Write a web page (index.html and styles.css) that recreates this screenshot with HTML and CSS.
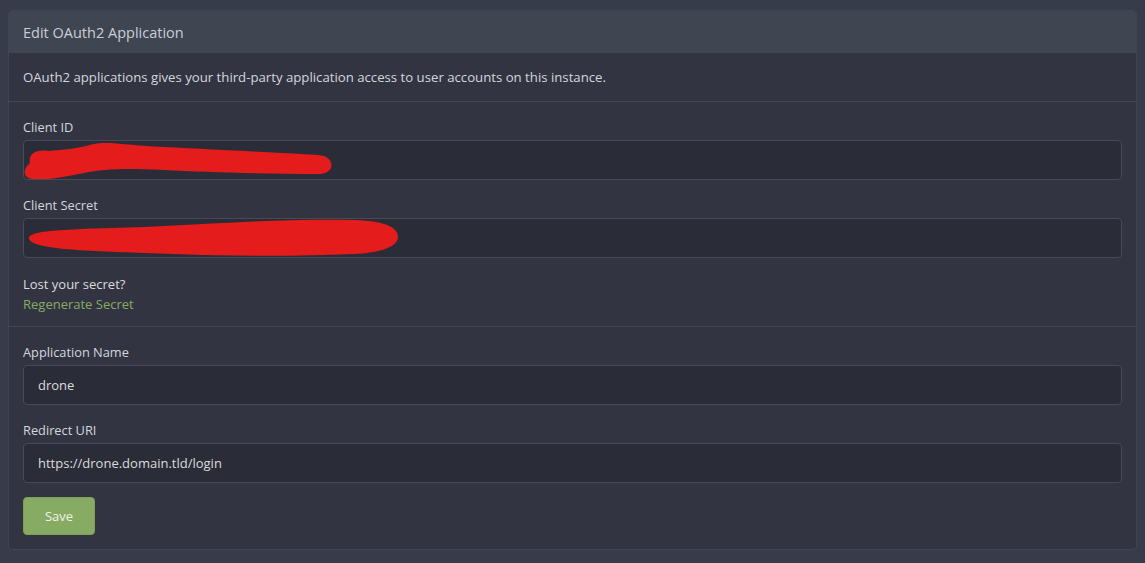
FILE: index.html
```html
<!DOCTYPE html>
<html>
<head>
<meta charset="utf-8">
<link rel="stylesheet" href="styles.css">
</head>
<body>
<div class="card">
  <div class="card-header">Edit OAuth2 Application</div>
  <div class="card-desc">OAuth2 applications gives your third-party application access to user accounts on this instance.</div>
  <div class="card-section first">
    <div class="field">
      <label class="label">Client ID</label>
      <div class="input redacted">
        <svg class="scribble" width="320" height="38" viewBox="0 0 320 38">
          <path d="M6 22 C4 13 12 8 24 10 C40 9 55 7 70 3 C85 0 100 4 140 6 C200 9 260 12 294 14 C312 15 312 33 294 33 C240 33 180 31 140 29 C100 27 80 28 60 32 C40 36 20 40 8 38 C-2 36 -1 28 6 22 Z" fill="#e41c1c"/>
        </svg>
      </div>
    </div>
    <div class="field">
      <label class="label">Client Secret</label>
      <div class="input redacted">
        <svg class="scribble" width="380" height="38" viewBox="0 0 380 38">
          <path d="M5 19 C5 10 60 10 120 8 C200 4 260 0 330 1 C365 2 374 10 374 18 C374 28 355 34 330 35 C260 38 200 37 120 34 C60 32 5 30 5 19 Z" fill="#e41c1c"/>
        </svg>
      </div>
    </div>
    <p class="lost">Lost your secret?<br><a class="link" href="#">Regenerate Secret</a></p>
  </div>
  <div class="card-section">
    <div class="field">
      <label class="label">Application Name</label>
      <div class="input">drone</div>
    </div>
    <div class="field">
      <label class="label">Redirect URI</label>
      <div class="input">https://drone.domain.tld/login</div>
    </div>
    <button class="btn">Save</button>
  </div>
</div>
</body>
</html>
```

FILE: styles.css
```css
html, body {
  margin: 0;
  padding: 0;
  background: #383c4a;
}
body {
  padding: 10px 8px 8px 8px;
  font-family: "Open Sans", "Noto Sans", sans-serif;
  font-size: 13px;
  color: #dbdbdb;
}
.card {
  border: 1px solid #404552;
  border-radius: 4px;
  background: #323541;
  overflow: hidden;
}
.card-header {
  background: #404552;
  height: 42px;
  line-height: 43px;
  padding: 0 14px;
  font-size: 14.5px;
  color: #c9ced8;
}
.card-desc {
  height: 48px;
  line-height: 49px;
  padding: 0 14px;
  border-bottom: 1px solid #404552;
  font-size: 13.2px;
  color: #d2d6dd;
}
.card-section {
  padding: 16px 14px 14px 14px;
  display: flex;
  flex-direction: column;
}
.card-section.first {
  padding-bottom: 12px;
  border-bottom: 1px solid #404552;
}
.field {
  display: flex;
  flex-direction: column;
  gap: 4px;
  margin-bottom: 16px;
}
.label {
  line-height: 19px;
  font-size: 12.8px;
  color: #d2d6dd;
}
.input {
  box-sizing: border-box;
  height: 40px;
  margin-top: -1px;
  border: 1px solid #454a57;
  border-radius: 4px;
  background: #2a2d38;
  padding: 0 14px;
  line-height: 39px;
  font-size: 13px;
  color: #dbdbdb;
}
.redacted {
  position: relative;
}
.scribble {
  position: absolute;
  left: 0;
  top: 0;
}
.lost {
  margin: 0;
  line-height: 20px;
}
.link {
  color: #87ab63;
  text-decoration: none;
}
.btn {
  align-self: flex-start;
  margin-top: -2px;
  width: 72px;
  height: 38px;
  border: 1px solid #7e9f59;
  border-radius: 4px;
  background: #87ab63;
  color: #eef3e8;
  font-family: inherit;
  font-size: 13px;
  padding: 0;
}
```
